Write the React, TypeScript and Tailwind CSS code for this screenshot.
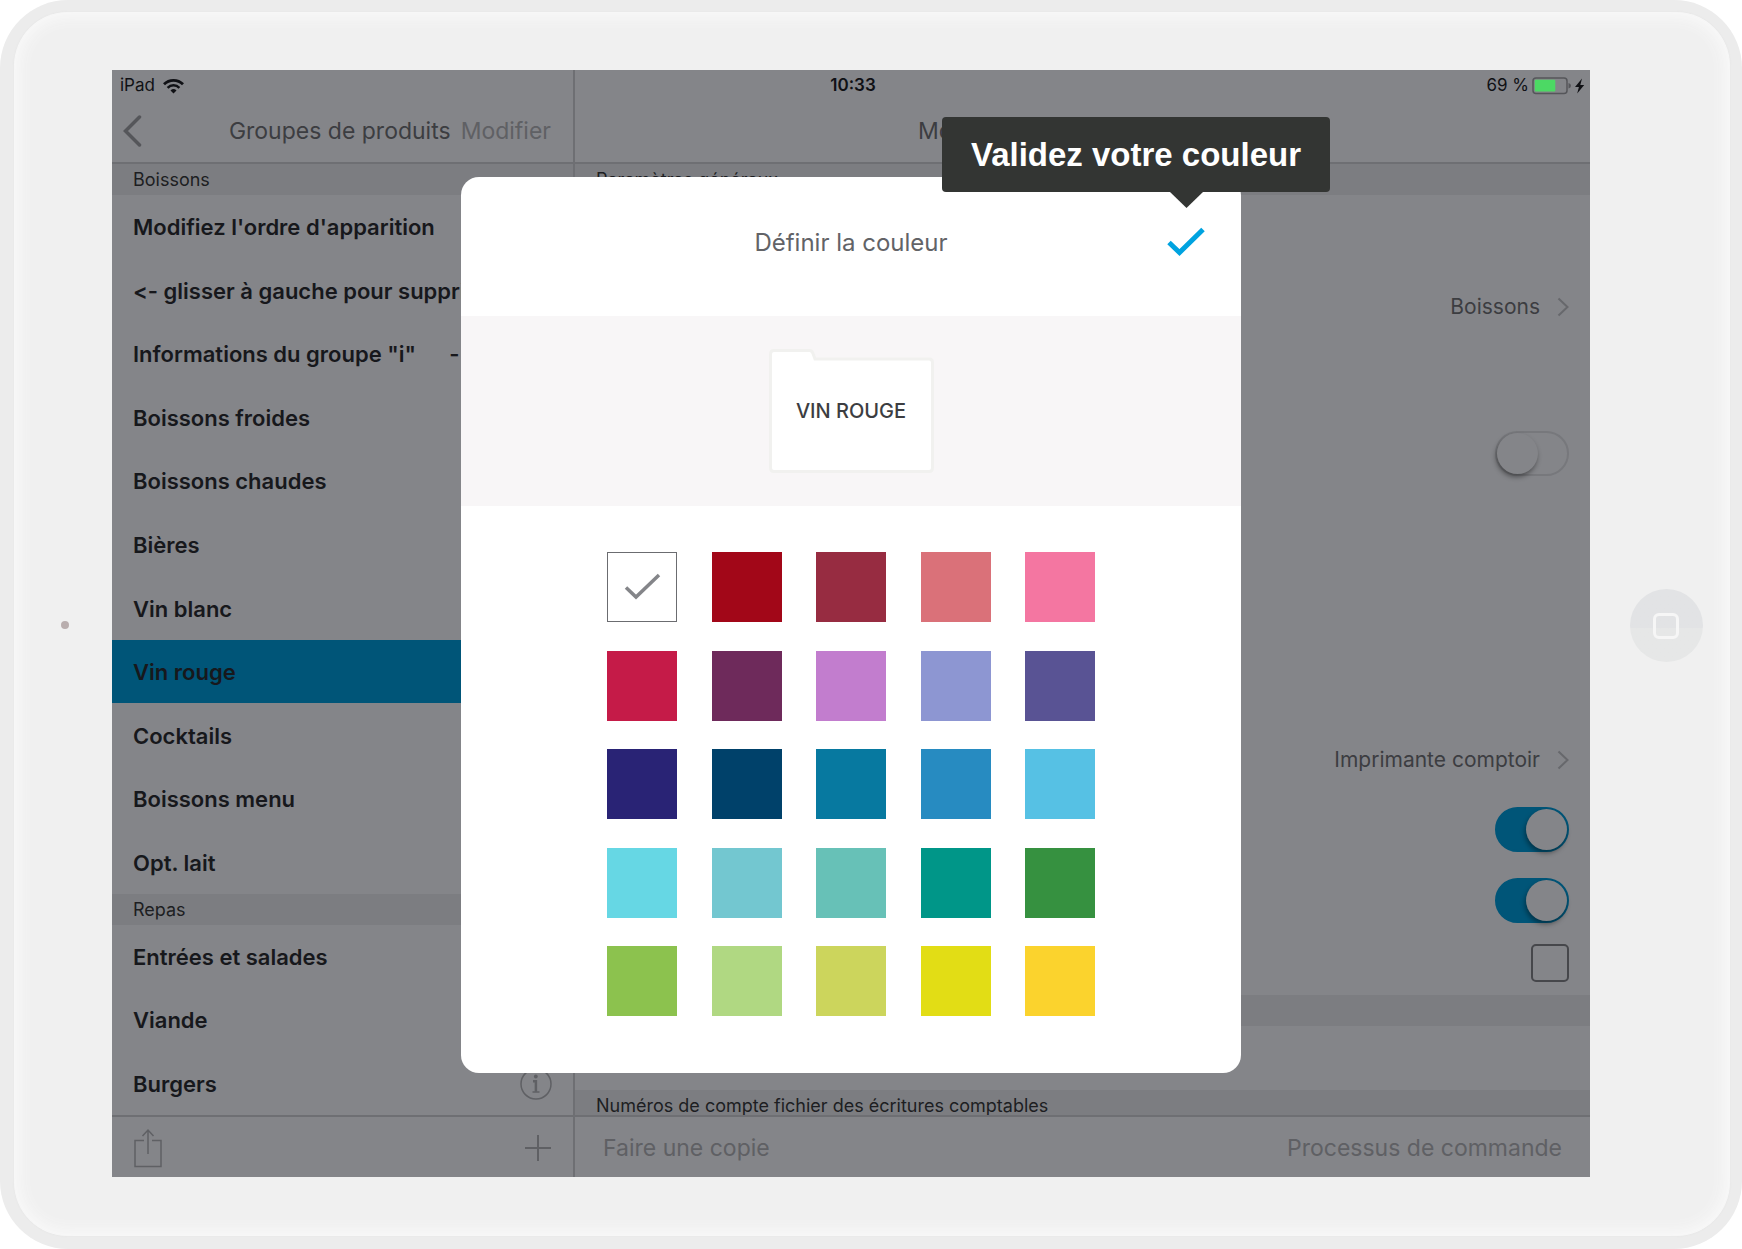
import React, { useState } from "react";

const drinks = [
  "Modifiez l'ordre d'apparition",
  "<- glisser à gauche pour supprimer",
  "Informations du groupe \"i\"      ->",
  "Boissons froides",
  "Boissons chaudes",
  "Bières",
  "Vin blanc",
  "Vin rouge",
  "Cocktails",
  "Boissons menu",
  "Opt. lait",
];

const meals = ["Entrées et salades", "Viande", "Burgers"];

const colors = [
  { name: "Blanc", bg: "bg-white border border-[#6b6c70]" },
  { name: "Rouge", bg: "bg-[#a20718]" },
  { name: "Bordeaux", bg: "bg-[#972c41]" },
  { name: "Corail", bg: "bg-[#da7179]" },
  { name: "Rose", bg: "bg-[#f476a1]" },
  { name: "Cramoisi", bg: "bg-[#c51b48]" },
  { name: "Prune", bg: "bg-[#6e2a5b]" },
  { name: "Orchidée", bg: "bg-[#c27dce]" },
  { name: "Lavande", bg: "bg-[#8d96d2]" },
  { name: "Violet", bg: "bg-[#595394]" },
  { name: "Indigo", bg: "bg-[#292375]" },
  { name: "Marine", bg: "bg-[#00416a]" },
  { name: "Pétrole", bg: "bg-[#0779a0]" },
  { name: "Bleu", bg: "bg-[#278bc1]" },
  { name: "Ciel", bg: "bg-[#56c1e4]" },
  { name: "Cyan", bg: "bg-[#66d7e4]" },
  { name: "Glacier", bg: "bg-[#73c7d0]" },
  { name: "Menthe", bg: "bg-[#67c1b7]" },
  { name: "Émeraude", bg: "bg-[#009688]" },
  { name: "Vert", bg: "bg-[#369140]" },
  { name: "Pomme", bg: "bg-[#8cc24e]" },
  { name: "Tilleul", bg: "bg-[#b0d882]" },
  { name: "Olive", bg: "bg-[#ccd55c]" },
  { name: "Citron", bg: "bg-[#e2dd15]" },
  { name: "Jaune", bg: "bg-[#fbd32d]" },
];

const SectionTitle = ({ children }: { children?: React.ReactNode }) => (
  <h2 className="h-[31px] shrink-0 bg-[#7c7d81] px-[21px] text-lg leading-[31px] text-[#1d1e22]">
    {children}
  </h2>
);

const GroupRow = ({ name, active }: { name: string; active?: boolean }) => (
  <li className={active ? "min-h-0 bg-[#005578]" : "min-h-0"}>
    <button
      type="button"
      className="flex h-full w-full items-center justify-between overflow-hidden pt-[2px] pr-[21px] pl-[21px] text-left text-[22px] font-semibold whitespace-pre text-[#17181c] [font-feature-settings:'calt'_0]"
    >
      {name}
      {name === "Burgers" && (
        <svg className="size-8 shrink-0" viewBox="0 0 32 32" fill="none" stroke="#5f6064">
          <circle cx="16" cy="16" r="15" strokeWidth="1.5" />
          <circle cx="15.8" cy="8.5" r="1.9" fill="#5f6064" stroke="none" />
          <path d="M13 13.200h2.900v10.500" strokeWidth="2.500" />
          <path d="M12.500 24h7" strokeWidth="1.500" />
        </svg>
      )}
    </button>
  </li>
);

const Chevron = () => (
  <svg className="h-5 w-3" viewBox="0 0 12 20" fill="none" stroke="#67686c" strokeWidth="2">
    <path d="M1.5 1.5 10.5 10l-9 8.5" />
  </svg>
);

const ValueRow = ({ value, size }: { value: string; size: string }) => (
  <button
    type="button"
    className={`flex w-full items-center justify-end gap-[17px] pt-[2px] pr-[21px] text-[21px] text-[#3c3d41] ${size}`}
  >
    {value}
    <Chevron />
  </button>
);

const Toggle = ({ label, on }: { label: string; on?: boolean }) => (
  <input
    type="checkbox"
    role="switch"
    aria-label={label}
    defaultChecked={on}
    className="relative h-[45px] w-[74px] appearance-none rounded-full border-2 border-[#77787c] before:absolute before:top-0 before:left-0 before:size-[41px] before:rounded-full before:bg-[#848589] before:shadow-[-1px_3px_5px_rgba(0,0,0,0.4)] checked:border-[#005578] checked:bg-[#005578] checked:before:left-[29px]"
  />
);

const StatusIcons = () => (
  <svg className="h-[18px] w-[54px]" viewBox="0 0 54 18" fill="none">
    <rect x="1" y="1" width="34" height="15.5" rx="3" stroke="#55565a" strokeWidth="1.5" />
    <rect x="2.8" y="2.8" width="20.5" height="11.8" rx="1" fill="#4cd964" />
    <path d="M36.500 6q2.500.8 2.500 2.800t-2.500 2.800z" fill="#55565a" />
    <path d="M50 1.500 43 10h3.900l-1.700 6.500 7-8.500h-3.900z" fill="#101115" />
  </svg>
);

const Wifi = () => (
  <svg className="h-4 w-[21px]" viewBox="0 0 21 16" fill="none" stroke="#101115">
    <path d="M1 6.200a13.500 13.500 0 0 1 19 0" strokeWidth="2.800" />
    <path d="M4.600 9.800a8.300 8.300 0 0 1 11.800 0" strokeWidth="2.500" />
    <path d="M10.500 15.500 7.500 12.400a4.300 4.300 0 0 1 6 0z" fill="#101115" stroke="none" />
  </svg>
);

const Sidebar = () => (
  <aside className="flex w-[463px] shrink-0 flex-col border-r-2 border-[#6e6f73]">
    <header className="flex h-[94px] items-end border-b-2 border-[#6e6f73] pr-[22px] pb-[13px] pl-[10px] text-[23px] leading-9">
      <button type="button" aria-label="Retour" className="mb-[2px]">
        <svg className="h-8 w-5" viewBox="0 0 20 32" fill="none" stroke="#55565a" strokeWidth="3.500">
          <path d="M17.500 2 3.500 16l14 14" strokeLinecap="round" />
        </svg>
      </button>
      <h1 className="ml-auto text-[#3c3d41]">Groupes de produits</h1>
      <button type="button" className="ml-[10px] text-[#5f6064]">
        Modifier
      </button>
    </header>
    <SectionTitle>Boissons</SectionTitle>
    <ul className="grid h-[699px] auto-rows-fr">
      {drinks.map((name) => (
        <GroupRow key={name} name={name} active={name === "Vin rouge"} />
      ))}
    </ul>
    <SectionTitle>Repas</SectionTitle>
    <ul className="grid h-[190px] auto-rows-fr">
      {meals.map((name) => (
        <GroupRow key={name} name={name} />
      ))}
    </ul>
    <footer className="flex h-[62px] items-center justify-between border-t-2 border-[#6e6f73] px-[22px] pt-[2px]">
      <button type="button" aria-label="Partager">
        <svg className="h-10 w-7" viewBox="0 0 28 40" fill="none" stroke="#5f6064" strokeWidth="1.500">
          <path d="M10 12.500H1v26h26v-26h-9M14 26V2M8.500 8 14 2l5.500 6" />
        </svg>
      </button>
      <button type="button" aria-label="Ajouter">
        <svg className="size-[26px]" viewBox="0 0 26 26" fill="none" stroke="#5f6064" strokeWidth="2">
          <path d="M13 0v26M0 13h26" />
        </svg>
      </button>
    </footer>
  </aside>
);

const Details = () => (
  <section className="flex min-w-0 flex-1 flex-col">
    <header className="flex h-[94px] items-end justify-center border-b-2 border-[#6e6f73] pb-[13px] text-[23px] leading-9 text-[#3c3d41]">
      <h1>Modifier le groupe de produits</h1>
    </header>
    <SectionTitle>Paramètres généraux</SectionTitle>
    <div className="pt-[79px]">
      <ValueRow value="Boissons" size="h-16" />
    </div>
    <div className="flex h-[150px] items-end justify-end pr-[21px] pb-3">
      <Toggle label="Groupe masqué" />
    </div>
    <div className="pt-[236px]">
      <ValueRow value="Imprimante comptoir" size="h-[70px]" />
    </div>
    <div className="flex h-[71px] items-center justify-end pr-[21px]">
      <Toggle label="Impression cuisine" on />
    </div>
    <div className="flex h-[71px] items-center justify-end pr-[21px]">
      <Toggle label="Impression reçu" on />
    </div>
    <div className="flex h-[59px] items-start justify-end pt-2 pr-[21px]">
      <input
        type="checkbox"
        aria-label="Option du groupe"
        className="size-[38px] appearance-none rounded-[5px] border-2 border-[#46474b]"
      />
    </div>
    <SectionTitle />
    <div className="h-16" />
    <div className="h-[25px] overflow-hidden">
      <SectionTitle>Numéros de compte fichier des écritures comptables</SectionTitle>
    </div>
    <footer className="flex h-[62px] items-center justify-between border-t-2 border-[#6e6f73] pt-[2px] pr-7 pl-7 text-[23px] text-[#5f6064]">
      <button type="button">Faire une copie</button>
      <button type="button">Processus de commande</button>
    </footer>
  </section>
);

const ColorDialog = () => {
  const [selected, setSelected] = useState("Blanc");

  return (
    <div
      role="dialog"
      aria-label="Définir la couleur"
      className="absolute inset-x-0 top-[107px] mx-auto w-[780px] rounded-[18px] bg-white"
    >
      <header className="relative flex h-[139px] items-center justify-center pb-2">
        <h2 className="text-2xl text-[#626367]">Définir la couleur</h2>
        <button type="button" aria-label="Valider" className="absolute top-[50px] right-9">
          <svg className="h-[30px] w-[38px]" viewBox="0 0 38 30" fill="none" stroke="#00a3e0" strokeWidth="5">
            <path d="M2 15.500 12.500 25.500 36 2.500" />
          </svg>
        </button>
        <div
          role="tooltip"
          className="absolute -top-[60px] -right-[89px] flex h-[75px] w-[388px] items-center justify-center rounded bg-[#333533] font-['Liberation_Sans',Arial,sans-serif] text-[33px] font-bold text-white"
        >
          Validez votre couleur
          <svg className="absolute top-[74px] right-[126px] h-[17px] w-[35px]" viewBox="0 0 35 17">
            <path d="M0 0h35L17.500 17z" fill="#333533" />
          </svg>
        </div>
      </header>
      <div className="flex h-[190px] items-center justify-center bg-[#f8f6f7]">
        <div className="relative flex h-[124px] w-[165px] items-center justify-center">
          <svg className="absolute inset-0" viewBox="0 0 165 124">
            <path
              d="M5 1.500h35.500q2.500 0 3.500 3l2 5.500H160q3.500 0 3.500 3.500V119q0 3.500-3.500 3.500H5q-3.500 0-3.500-3.500V5q0-3.500 3.500-3.500z"
              fill="#fff"
              stroke="#f1f1ef"
              strokeWidth="3"
            />
          </svg>
          <span className="relative text-xl font-medium text-[#3c3d41]">VIN ROUGE</span>
        </div>
      </div>
      <div className="px-[146px] pt-[46px] pb-[57px]">
        <div className="grid h-[464px] grid-cols-[repeat(5,70px)] content-between justify-between">
          {colors.map((color) => (
            <label key={color.name} className="relative flex size-[70px]">
              <input
                type="radio"
                name="color"
                aria-label={color.name}
                checked={selected === color.name}
                onChange={() => setSelected(color.name)}
                className={`size-full appearance-none ${color.bg}`}
              />
              {selected === color.name && (
                <svg
                  className="absolute inset-0"
                  viewBox="0 0 70 70"
                  fill="none"
                  stroke="#848589"
                  strokeWidth="3.500"
                >
                  <path d="M19 35.500 29 45 52 23" />
                </svg>
              )}
            </label>
          ))}
        </div>
      </div>
    </div>
  );
};

const App = () => {
  return (
    <div className="bg-white font-['Inter',sans-serif]">
      <div className="rounded-[68px] bg-[#ececec] pt-3 pr-3 pb-[13px] pl-[14px]">
        <div className="flex items-center rounded-[54px] bg-[#f0f0f0] pt-[58px] pb-[59px] shadow-[inset_0_0_16px_4px_#fafafa,0_0_2px_#e2e2e2]">
          <div className="flex w-[98px] shrink-0 justify-center pt-[2px] pl-1">
            <span className="size-2 rounded-full bg-[#b9aeae]" />
          </div>
          <main className="relative flex min-w-0 flex-1 bg-[#848589]">
            <Sidebar />
            <Details />
            <div className="absolute inset-x-0 top-0 grid h-[31px] grid-cols-3 items-center pr-1 pl-2 text-[17px] text-[#101115]">
              <span className="flex items-center gap-2">
                iPad
                <Wifi />
              </span>
              <span className="text-center font-semibold">10:33</span>
              <span className="flex items-center justify-end gap-[3px]">
                69 %
                <StatusIcons />
              </span>
            </div>
            <ColorDialog />
          </main>
          <div className="flex w-[140px] shrink-0 justify-center pt-1 pl-3">
            <button
              type="button"
              aria-label="Accueil"
              className="flex size-[73px] items-center justify-center rounded-full bg-linear-to-b from-[#e2e3e5] from-53% to-[#e6e7e7] to-53%"
            >
              <span className="size-[26px] rounded-md border-3 border-[#f6f6f6]" />
            </button>
          </div>
        </div>
      </div>
    </div>
  );
};

export default App;
